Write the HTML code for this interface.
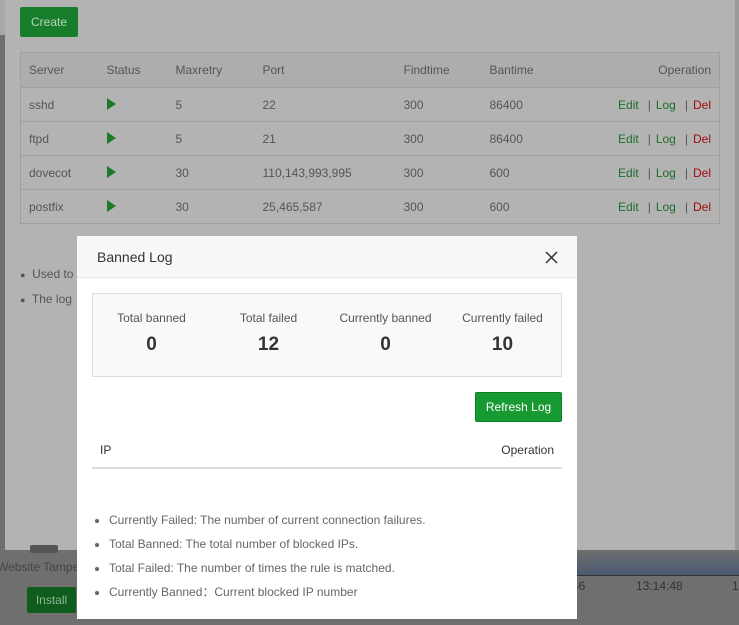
<!DOCTYPE html>
<html><head><style>
*{margin:0;padding:0;box-sizing:border-box}
body{width:739px;height:625px;overflow:hidden;background:#6f6f6f;font-family:"Liberation Sans",sans-serif;position:relative}
.abs{position:absolute}
.panel{left:5px;top:0;width:730px;height:550px;background:#b3b3b3}
.btn{background:#177d2a;color:#b9d6bd;font-size:12px;border-radius:2px;text-align:center}
table.bg{position:absolute;left:20px;top:52px;width:700px;border-collapse:collapse;border:1px solid #a0a0a0;font-size:12px;color:#555}
table.bg td{height:34px;border-top:1px solid #a0a0a0;padding-left:8px}
table.bg tr:first-child td{background:#adadad;height:35px;border-top:none}
.g{color:#1c6e2a}.r{color:#9e0b0b}
.op{text-align:right;padding-right:8px;word-spacing:0}
.op i{font-style:normal;margin:0 5px 0 9px}
.tri{display:inline-block;width:0;height:0;border-left:9px solid #1c7a2a;border-top:6px solid transparent;border-bottom:6px solid transparent;vertical-align:middle;margin-top:-3px}
.modal{left:77px;top:236px;width:500px;height:383px;background:#fff}
.mh{height:42px;background:#f8f8f8;border-bottom:1px solid #e8e8e8;font-size:14px;color:#333;padding:13px 0 0 20px}
.stats{left:15px;top:57px;width:470px;height:84px;background:#f9f9f9;border:1px solid #ddd}
.st{position:absolute;top:17px;width:117px;text-align:center;color:#555;font-size:12px}
.st b{display:block;font-size:19px;color:#333;margin-top:9px}
ul.m{position:absolute;left:109px;top:512px;font-size:12px;color:#666;list-style:disc}
ul.m li{height:24px;line-height:16px}
</style></head><body>
<div class="abs panel"></div>
<div class="abs" style="left:0;top:0;width:5px;height:35px;background:#a8a8a8"></div>
<div class="abs" style="left:735px;top:0;width:4px;height:550px;background:#999"></div>
<div class="abs btn" style="left:20px;top:7px;width:58px;height:30px;line-height:30px">Create</div>
<table class="bg">
<tr><td style="width:78px">Server</td><td style="width:69px">Status</td><td style="width:87px">Maxretry</td><td style="width:141px">Port</td><td style="width:86px">Findtime</td><td>Bantime</td><td class="op">Operation</td></tr>
<tr><td>sshd</td><td><span class="tri"></span></td><td>5</td><td>22</td><td>300</td><td>86400</td><td class="op"><span class="g">Edit</span><i>|</i><span class="g">Log</span><i>|</i><span class="r">Del</span></td></tr>
<tr><td>ftpd</td><td><span class="tri"></span></td><td>5</td><td>21</td><td>300</td><td>86400</td><td class="op"><span class="g">Edit</span><i>|</i><span class="g">Log</span><i>|</i><span class="r">Del</span></td></tr>
<tr><td>dovecot</td><td><span class="tri"></span></td><td>30</td><td>110,143,993,995</td><td>300</td><td>600</td><td class="op"><span class="g">Edit</span><i>|</i><span class="g">Log</span><i>|</i><span class="r">Del</span></td></tr>
<tr><td>postfix</td><td><span class="tri"></span></td><td>30</td><td>25,465,587</td><td>300</td><td>600</td><td class="op"><span class="g">Edit</span><i>|</i><span class="g">Log</span><i>|</i><span class="r">Del</span></td></tr>
</table>
<div class="abs" style="left:20px;top:262px;font-size:12px;color:#555;line-height:24px"><span style="font-size:9px">●</span>&nbsp; Used to<br><span style="font-size:9px">●</span>&nbsp; The log</div>
<div class="abs" style="left:-3px;top:560px;font-size:12px;color:#444">Website Tamper</div>
<div class="abs" style="left:30px;top:545px;width:28px;height:8px;background:#555;border-radius:2px"></div>
<div class="abs btn" style="left:27px;top:587px;width:49px;height:26px;line-height:26px;background:#0f5d1e;color:#8fb595">Install</div>
<div class="abs" style="left:577px;top:550px;width:162px;height:25px;background:linear-gradient(#6f6f6f,#4a5b70)"></div>
<div class="abs" style="left:577px;top:575px;width:162px;height:1px;background:#333"></div>
<div class="abs" style="left:572px;top:579px;font-size:12px;color:#333">46</div>
<div class="abs" style="left:636px;top:579px;font-size:12px;color:#333">13:14:48</div>
<div class="abs" style="left:732px;top:579px;font-size:12px;color:#333">1</div>
<div class="abs modal">
<div class="mh">Banned Log</div>
<svg class="abs" style="left:468px;top:15px" width="13" height="13" viewBox="0 0 13 13"><path d="M1 1L12 12M12 1L1 12" stroke="#333" stroke-width="1.5"/></svg>
<div class="abs stats">
<div class="st" style="left:0">Total banned<b>0</b></div>
<div class="st" style="left:117px">Total failed<b>12</b></div>
<div class="st" style="left:234px">Currently banned<b>0</b></div>
<div class="st" style="left:351px">Currently failed<b>10</b></div>
</div>
<div class="abs" style="left:398px;top:156px;width:87px;height:30px;background:#169a31;border:1px solid #0f7f25;border-radius:2px;color:#fff;font-size:12px;text-align:center;line-height:28px">Refresh Log</div>
<div class="abs" style="left:23px;top:207px;font-size:12px;color:#333">IP</div>
<div class="abs" style="right:23px;top:207px;font-size:12px;color:#333">Operation</div>
<div class="abs" style="left:15px;top:231px;width:470px;height:2px;background:#ddd"></div>
</div>
<ul class="m">
<li>Currently Failed: The number of current connection failures.</li>
<li>Total Banned: The total number of blocked IPs.</li>
<li>Total Failed: The number of times the rule is matched.</li>
<li>Currently Banned：Current blocked IP number</li>
</ul>
</body></html>
